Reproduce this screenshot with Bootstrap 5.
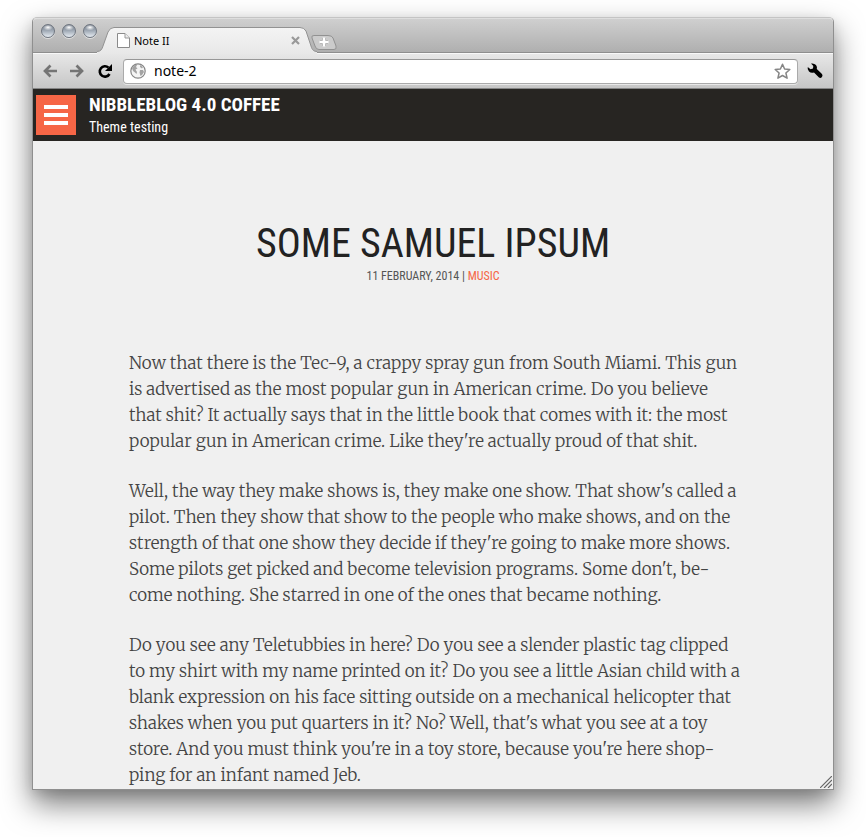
<!DOCTYPE html>
<html lang="en">
<head>
<meta charset="utf-8">
<meta name="viewport" content="width=device-width, initial-scale=1">
<title>Note II</title>
<link href="https://cdn.jsdelivr.net/npm/bootstrap@5.3.0/dist/css/bootstrap.min.css" rel="stylesheet">
<style>
body{background:#fff;padding:17px 32px 47px;overflow-x:hidden}
.window{border:1px solid #8f8f8f;border-top-color:#c4c4c4;border-radius:5px 5px 0 0;background:#f0f0f0;
  box-shadow:0 14px 30px rgba(0,0,0,.52),0 4px 12px rgba(0,0,0,.1)}
.ui{font-family:"Noto Sans","Open Sans",sans-serif;color:#000}
.strip{height:35px;background:linear-gradient(#cfcfcf,#afafaf);border-top:1px solid #dedede;border-bottom:1px solid #8e8e8e;border-radius:4px 4px 0 0;padding-left:8px}
.lights{gap:7px;padding-top:5px}
.plain{border:0;background:none;padding:0;line-height:0;color:inherit}
.light{width:14px;height:14px;border-radius:50%;border:1px solid #6f7680;background:radial-gradient(ellipse 5px 3px at 50% 20%,#fff 0,rgba(255,255,255,0) 100%),linear-gradient(#727b87,#a3adb8 50%,#e6ecf2);box-shadow:0 1px 0 #e0e0e0}
.browser-tab{width:214px;height:27px;margin-top:8px;padding:0 11px 0 20px;font-size:11px;line-height:14px}
.tab-shape{left:0;top:0;z-index:-1}
.bar{height:36px;background:linear-gradient(#e7e7e7,#c6c6c6);border-top:1px solid #f8f8f8;border-bottom:1px solid #858585;padding:0 10px}
.address{height:25px;background:#fff;border:1px solid #aaa;border-top-color:#979797;border-radius:4px;box-shadow:0 1px 0 #e8e8e8;padding:0 6px;margin-left:10px;margin-right:9px}
.address input{border:0;outline:0;font-size:14px;line-height:20px;padding:0;min-width:0;background:none}
.pair{gap:7px}
.reload{margin:0 0 0 13px}
.cond{font-family:"Roboto Condensed","Liberation Sans Narrow","Liberation Sans",sans-serif}
.site-head{background:#272522;color:#fff;height:52px;padding-left:3px;gap:13px}
.burger{width:40px;height:40px;background:#f66646}
.titles{padding-top:2px}
.site-name{font-size:19px;line-height:22px;font-weight:700;margin:0}
.tagline{font-size:14px;line-height:22px;margin:0}
.post{padding:79px 96px 1px}
.post h1{font-size:40px;line-height:48px;color:#222;margin:0;font-weight:400}
.meta{font-size:12px;line-height:16px;color:#555;margin:0 0 66px}
.meta a{color:#f66646;text-decoration:none}
.prose{font-family:Merriweather,"Liberation Serif",serif;font-size:17px;font-weight:300;line-height:26px;color:#444;white-space:nowrap}
.prose p{margin:0 0 24px}
.prose p:last-child{margin:0}
.grip{right:1px;bottom:1px}
</style>
</head>
<body class="d-flex flex-column min-vh-100">
<div class="window flex-grow-1 d-flex flex-column position-relative">
  <div class="ui">
    <div class="strip d-flex align-items-start">
      <div class="lights d-flex">
        <button class="plain light" aria-label="Close window"></button>
        <button class="plain light" aria-label="Minimize"></button>
        <button class="plain light" aria-label="Zoom"></button>
      </div>
      <div class="browser-tab d-flex align-items-center position-relative z-1">
        <svg class="tab-shape position-absolute" width="220" height="27" viewBox="0 0 220 27"><defs><linearGradient id="tg" x1="0" y1="0" x2="0" y2="1"><stop stop-color="#f4f4f4"/><stop offset="1" stop-color="#e8e8e8"/></linearGradient></defs><path d="M0 27V24.500C4 24.500 5 22 6 19L11 5Q13 .5 17 .5H203Q207 .5 209 4L214 19C215 23 217 24.500 220 24.500V27Z" fill="url(#tg)"/><path d="M0 24.500C4 24.500 5 22 6 19L11 5Q13 .5 17 .5H203Q207 .5 209 4L214 19C215 23 217 24.500 220 24.500" fill="none" stroke="#929292"/></svg>
        <svg width="13" height="15" viewBox="0 0 13 15"><path d="M.5.5H8L12.500 5V14.500H.5Z" fill="#fff" stroke="#8b8b8b"/><path d="M8 .5V5H12.500" fill="#eee" stroke="#999"/></svg>
        <span class="flex-grow-1 ps-1">Note II</span>
        <button class="plain" aria-label="Close tab"><svg width="9" height="9" viewBox="0 0 9 9"><path d="M1 1L8 8M8 1L1 8" stroke="#999" stroke-width="2.200"/></svg></button>
      </div>
      <button class="plain position-relative z-1 pt-3" aria-label="New tab"><svg class="d-block" width="27" height="16" viewBox="0 1 27 16"><path d="M3 1.500H17Q21 1.500 22 4L25 12Q26 15.500 23 15.500H8Q5 15.500 4 12L1 4Q0 1.500 3 1.500Z" fill="#cbcbcb" stroke="#919191"/><path d="M13 4V12M9 8H17" stroke="#a0a0a0" stroke-width="4"/><path d="M13 3.500V12.500M8.500 8H17.500" stroke="#fff" stroke-width="2.600"/></svg></button>
    </div>
    <div class="bar d-flex align-items-center">
      <div class="d-flex pair">
        <button class="plain" aria-label="Back"><svg width="15" height="14" viewBox="0 0 15 14"><path d="M14 7H2M7.500 1.500L2 7L7.500 12.500" fill="none" stroke="#747474" stroke-width="2.700"/></svg></button>
        <button class="plain ps-1" aria-label="Forward"><svg width="15" height="14" viewBox="0 0 15 14"><path d="M1 7H13M7.500 1.500L13 7L7.500 12.500" fill="none" stroke="#747474" stroke-width="2.700"/></svg></button>
      </div>
      <button class="plain reload" aria-label="Reload"><svg width="16" height="15" viewBox="0 0 16 15"><path d="M12.500 10A5.200 5.200 0 1 1 11.500 3.600" fill="none" stroke="#000" stroke-width="2.600"/><path d="M15 0V7H8Z"/></svg></button>
      <div class="address d-flex align-items-center flex-grow-1 gap-2">
        <svg width="16" height="16" viewBox="0 0 16 16"><circle cx="8" cy="8" r="7.200" fill="#f4f4f4" stroke="#858585" stroke-width="1.200"/><path d="M2 5L4.500 2L7 2L6 4L7.500 5.500L5.500 6.500L7 9L6.500 11L5 9.500L3 8ZM10 2L13 4L12 5.500L10 4ZM10 7L13 7L14 9L12 12L10.500 13L9.500 9.500Z" fill="#a3a3a3"/></svg>
        <input class="flex-grow-1" type="text" value="note-2" aria-label="Address">
        <button class="plain" aria-label="Bookmark"><svg width="17" height="17" viewBox="0 0 17 17"><path d="M8.500 1.200L10.600 6L15.800 6.500L11.900 10L13.100 15.200L8.500 12.500L3.900 15.200L5.100 10L1.200 6.500L6.400 6Z" fill="#fff" stroke="#858585" stroke-width="1.500" stroke-linejoin="round"/></svg></button>
      </div>
      <button class="plain" aria-label="Settings"><svg width="16" height="16" viewBox="0 0 16 16"><path d="M4 .6Q7 0 9 2Q10.500 4 9.800 6L15 11Q16 12.500 15 14Q13.500 15.700 12 14.600L7 9.500Q4 10.500 2 8.500Q0 6.500 .8 4L3.500 6.200L6 5.500L6.300 3Z"/></svg></button>
    </div>
  </div>
  <header class="site-head d-flex align-items-center">
    <button class="plain burger" aria-label="Menu"><svg width="24" height="20" viewBox="0 0 24 20"><path d="M0 2H24M0 10H24M0 18H24" stroke="#fff" stroke-width="4"/></svg></button>
    <div class="cond titles">
      <p class="site-name">NIBBLEBLOG 4.0 COFFEE</p>
      <p class="tagline">Theme testing</p>
    </div>
  </header>
  <main class="post">
    <div class="text-center cond">
      <h1 class="cond">SOME SAMUEL IPSUM</h1>
      <p class="meta">11 FEBRUARY, 2014 | <a href="#">MUSIC</a></p>
    </div>
    <article class="prose">
      <p>Now that there is the Tec-9, a crappy spray gun from South Miami. This gun<br>is advertised as the most popular gun in American crime. Do you believe<br>that shit? It actually says that in the little book that comes with it: the most<br>popular gun in American crime. Like they're actually proud of that shit.</p>
      <p>Well, the way they make shows is, they make one show. That show's called a<br>pilot. Then they show that show to the people who make shows, and on the<br>strength of that one show they decide if they're going to make more shows.<br>Some pilots get picked and become television programs. Some don't, be-<br>come nothing. She starred in one of the ones that became nothing.</p>
      <p>Do you see any Teletubbies in here? Do you see a slender plastic tag clipped<br>to my shirt with my name printed on it? Do you see a little Asian child with a<br>blank expression on his face sitting outside on a mechanical helicopter that<br>shakes when you put quarters in it? No? Well, that's what you see at a toy<br>store. And you must think you're in a toy store, because you're here shop-<br>ping for an infant named Jeb.</p>
    </article>
  </main>
  <svg class="grip position-absolute" width="12" height="12" viewBox="0 0 12 12"><path d="M0 12L12 0M4 12L12 4M8 12L12 8" stroke="#666" stroke-width="1.200"/></svg>
</div>
<script src="https://cdn.jsdelivr.net/npm/bootstrap@5.3.0/dist/js/bootstrap.bundle.min.js"></script>
</body>
</html>
